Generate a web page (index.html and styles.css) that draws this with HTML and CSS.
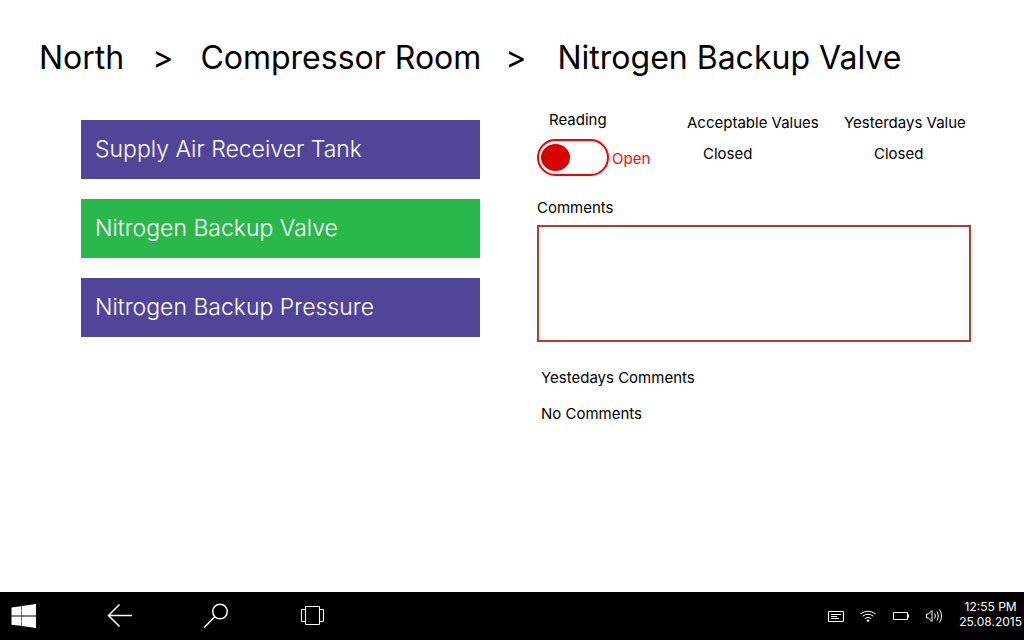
FILE: index.html
```html
<!DOCTYPE html>
<html lang="en">
<head>
<meta charset="utf-8">
<meta name="viewport" content="width=device-width, initial-scale=1">
<title>Nitrogen Backup Valve</title>
<link rel="stylesheet" href="styles.css">
</head>
<body class="screen">
<nav class="crumbs" aria-label="Breadcrumb">
  <a class="crumb" href="#north">North</a>
  <span class="sep sep-first">&gt;</span>
  <a class="crumb" href="#compressor-room">Compressor Room</a>
  <span class="sep sep-last">&gt;</span>
  <h1 class="crumb">Nitrogen Backup Valve</h1>
</nav>
<main class="content">
  <div class="points">
    <button class="point" type="button">Supply Air Receiver Tank</button>
    <button class="point point-active" type="button" aria-current="true">Nitrogen Backup Valve</button>
    <button class="point" type="button">Nitrogen Backup Pressure</button>
  </div>
  <section class="detail">
    <div class="readings">
      <div class="reading">
        <label class="reading-label" for="reading">Reading</label>
        <div class="reading-control">
          <input class="switch" id="reading" type="checkbox" role="switch">
          <span class="state">Open</span>
        </div>
      </div>
      <dl class="value">
        <dt class="value-label">Acceptable Values</dt>
        <dd class="value-text">Closed</dd>
      </dl>
      <dl class="value">
        <dt class="value-label">Yesterdays Value</dt>
        <dd class="value-text value-text-far">Closed</dd>
      </dl>
    </div>
    <label class="comments-label" for="comments">Comments</label>
    <textarea class="comments" id="comments"></textarea>
    <div class="history">
      <h2 class="history-title">Yestedays Comments</h2>
      <p class="history-text">No Comments</p>
    </div>
  </section>
</main>
<footer class="taskbar">
  <div class="keys">
    <button class="key" type="button" aria-label="Start">
      <svg width="26" height="26" viewBox="0 0 26 26"><path fill="#fff" d="M.5 4.600 10 3.200v9.300H.5zM11 3 25 1v11.500H11zM.5 13.500H10v9.300L.5 21.700z"/><path fill="#fff" d="M11 13.500h14V25l-14-2z"/><path fill="#777" d="M10 3.200l1-.2v9.500h-1zM10 13.500h1V23l-1-.2z"/></svg>
    </button>
    <button class="key" type="button" aria-label="Back">
      <svg class="line-icon" width="26" height="26" viewBox="0 0 26 26"><path d="M12.500 1.500 1.500 12.500 12.500 23.500M1.500 12.500H25"/></svg>
    </button>
    <button class="key" type="button" aria-label="Search">
      <svg class="line-icon" width="26" height="26" viewBox="0 0 26 26"><circle cx="17" cy="8.500" r="7.300"/><path d="M11.800 13.700 1.200 24.600"/></svg>
    </button>
    <button class="key" type="button" aria-label="Task view">
      <svg class="line-icon thin" width="26" height="26" viewBox="0 0 26 26"><path d="M6.500 3.500h14v18h-14zM6.500 6.500h-4v12h4M20.500 6.500h4v12h-4"/></svg>
    </button>
  </div>
  <div class="tray">
    <svg class="line-icon thin" width="18" height="18" viewBox="0 0 18 18"><path d="M1.500 4.500h15v10h-15zM4 7.500h10M4 9.500h6M4 11.500h8"/></svg>
    <svg class="line-icon thin" width="18" height="18" viewBox="0 0 18 18"><path d="M.5 6.800Q8 1.600 15.500 6.800M2.600 9.200Q8 5.200 13.400 9.200M4.800 11.500Q8 9 11.200 11.500"/><circle cx="8" cy="13.600" r=".8" fill="#fff"/></svg>
    <svg class="line-icon thin" width="18" height="18" viewBox="0 0 18 18"><path d="M.5 5.500h14v7h-14zM15.500 7.500v3"/></svg>
    <svg class="line-icon thin" width="18" height="18" viewBox="0 0 18 18"><path d="M.5 7h2l3.500-3.500v11L2.500 11h-2zM8.500 6.500Q10.500 9 8.500 11.500M11 4.500Q14 9 11 13.500M13.500 2.500Q17.500 9 13.500 15.500"/></svg>
    <time class="clock" datetime="2015-08-25T12:55">12:55 PM<br>25.08.2015</time>
  </div>
</footer>
</body>
</html>
```
FILE: styles.css
```css
* {
  box-sizing: border-box;
}

.screen {
  margin: 0;
  min-height: 100vh;
  display: flex;
  flex-direction: column;
  background: #fff;
  color: #000;
  font: 15px/20px Inter, "Liberation Sans", sans-serif;
}

.crumbs {
  display: flex;
  align-items: baseline;
  padding: 36px 40px 0 39px;
  font-size: 32px;
  line-height: 44px;
  white-space: nowrap;
}

.crumb {
  margin: 0;
  font: inherit;
  color: inherit;
  text-decoration: none;
}

.sep-first {
  margin: 0 27px 0 28px;
}

.sep-last {
  margin: 0 31px 0 24px;
}

.content {
  flex: 1;
  display: grid;
  grid-template-columns: 399fr 434fr;
  gap: 57px;
  align-items: start;
  padding: 30px 53px 24px 81px;
}

.points {
  display: grid;
  gap: 20px;
  padding-top: 10px;
}

.point {
  border: 0;
  border-radius: 0;
  padding: 14px;
  background: #514599;
  color: #fff;
  font: inherit;
  font-size: 23px;
  font-weight: 300;
  line-height: 31px;
  text-align: left;
}

.point-active {
  background: #2ab84c;
}

.readings {
  display: grid;
  grid-template-columns: 150fr 157fr 127fr;
}

.reading-label {
  display: block;
  padding-left: 12px;
}

.reading-control {
  display: flex;
  align-items: center;
  gap: 3px;
  margin-top: 9px;
}

.switch {
  appearance: none;
  margin: 0;
  width: 72px;
  height: 37px;
  padding: 3px 2px;
  border: 2px solid #f60000;
  border-radius: 19px;
  background: #fff;
}

.switch::before {
  content: "";
  display: block;
  width: 29px;
  height: 27px;
  border-radius: 50%;
  background: #d80000;
}

.switch:checked::before {
  margin-left: auto;
}

.state {
  padding-top: 2px;
  color: #ff0a0a;
}

.value {
  margin: 3px 0 0;
  white-space: nowrap;
}

.value-text {
  margin: 11px 0 0 16px;
}

.value-text-far {
  margin-left: 30px;
}

.comments-label {
  display: block;
  margin-top: 22px;
}

.comments {
  display: block;
  width: 100%;
  height: 117px;
  margin-top: 7px;
  padding: 8px;
  border: 2px solid #b83b32;
  border-radius: 0;
  background: #fff;
  font: inherit;
  resize: none;
}

.history {
  padding: 26px 4px 0;
}

.history-title,
.history-text {
  margin: 0 0 16px;
  font: inherit;
}

.taskbar {
  display: flex;
  align-items: center;
  justify-content: space-between;
  height: 48px;
  padding: 0 2px 0 11px;
  background: #000;
  color: #fff;
}

.keys {
  display: flex;
  gap: 70px;
}

.key {
  display: flex;
  padding: 0;
  border: 0;
  background: none;
}

.line-icon {
  fill: none;
  stroke: #fff;
  stroke-width: 1.5;
}

.thin {
  stroke-width: 1;
}

.tray {
  display: flex;
  align-items: center;
  gap: 15px;
}

.clock {
  padding-bottom: 5px;
  font-size: 12px;
  line-height: 15px;
  text-align: center;
}
```
